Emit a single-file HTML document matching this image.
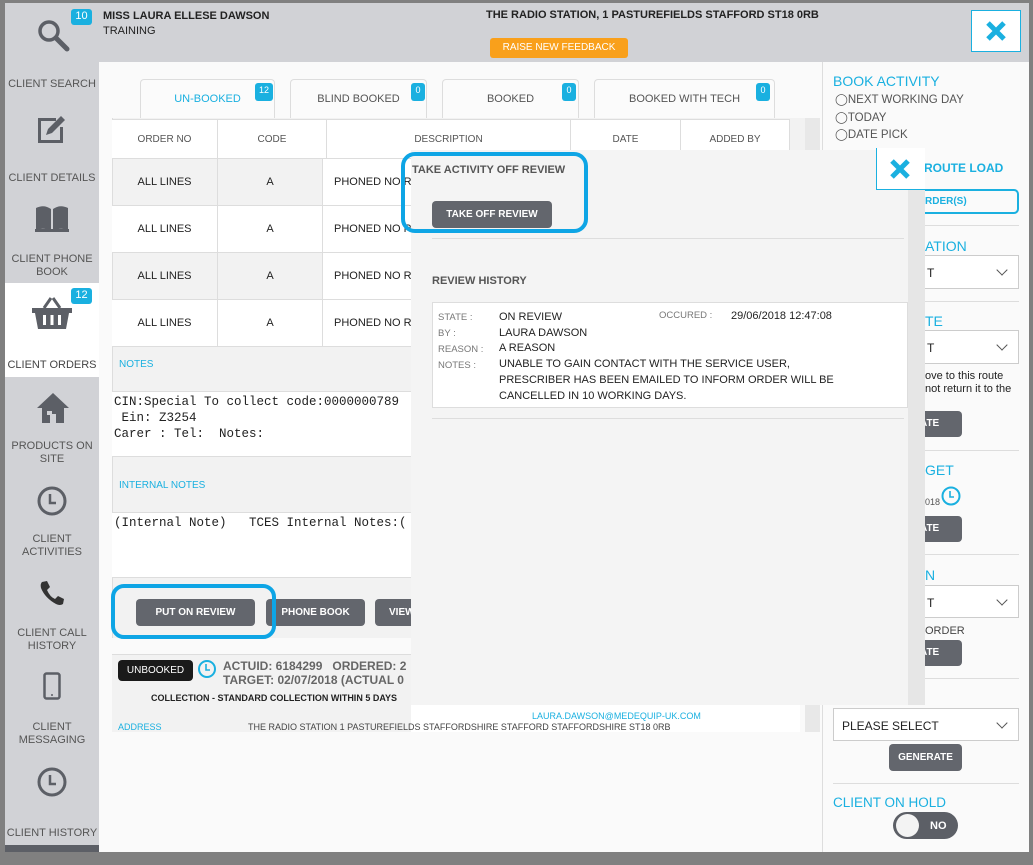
<!DOCTYPE html>
<html><head><meta charset="utf-8"><style>
*{box-sizing:border-box;margin:0;padding:0}
body{width:1033px;height:865px;background:#808080;font-family:"Liberation Sans",Arial,sans-serif;position:relative;overflow:hidden;color:#222}
.a{position:absolute}
.side{left:5px;top:3px;width:94px;height:849px;background:#d1d2d6}
.sl{position:absolute;left:0;width:94px;text-align:center;font-size:11px;color:#555;line-height:13px}
.badge{position:absolute;background:#1ab0e0;color:#fff;font-size:11px;border-radius:3px;text-align:center;line-height:15px;height:16px}
.btn{position:absolute;background:#63666d;color:#fff;font-size:10px;font-weight:bold;text-align:center;border-radius:4px}
.tab{position:absolute;top:79px;height:40px;border:1px solid #ddd;border-bottom:none;background:#fbfbfb;border-radius:4px 4px 0 0;font-size:11px;color:#555;text-align:center;line-height:38px}
.cell{position:absolute;border-right:1px solid #ddd;border-bottom:1px solid #ddd;font-size:11px;display:flex;align-items:center;justify-content:center}
.blue{color:#1ab0e0}
.hr{position:absolute;height:1px;background:#ddd}
.sel{position:absolute;border:1px solid #ccc;background:#fff;font-size:12px}
.chev{position:absolute;right:12px;top:10px;width:8px;height:8px;border-right:1px solid #555;border-bottom:1px solid #555;transform:rotate(45deg)}
</style></head><body>
<div class="a side"></div>
<svg class="a" style="left:36px;top:18px" width="34" height="34" viewBox="0 0 34 34"><circle cx="13" cy="13" r="9" fill="none" stroke="#5c5f66" stroke-width="3.5"/><line x1="20" y1="20" x2="31" y2="31" stroke="#5c5f66" stroke-width="5" stroke-linecap="round"/></svg>
<div class="badge" style="left:71px;top:9px;width:21px">10</div>
<div class="sl" style="left:5px;top:78px">CLIENT SEARCH</div>
<svg class="a" style="left:36px;top:113px" width="32" height="32" viewBox="0 0 32 32"><path d="M2 5h18v3H5v19h19V14h3v16H2z" fill="#5c5f66"/><path d="M10 22l2-6L25 3l4 4-13 13z" fill="#5c5f66"/></svg>
<div class="sl" style="left:5px;top:172px">CLIENT DETAILS</div>
<svg class="a" style="left:35px;top:204px" width="34" height="28" viewBox="0 0 34 28"><path d="M1 4q8-4 15 1v22q-7-4-15-1z M18 5q7-5 15-1v22q-8-3-15 1z" fill="#5c5f66"/><rect x="0" y="25" width="34" height="3" fill="#5c5f66"/></svg>
<div class="sl" style="left:5px;top:253px">CLIENT PHONE<br>BOOK</div>
<div class="a" style="left:5px;top:283px;width:94px;height:94px;background:#fff"></div>
<svg class="a" style="left:32px;top:296px" width="40" height="36" viewBox="0 0 40 36"><path d="M12 12l7-10M28 12l-7-10" stroke="#5c5f66" stroke-width="3"/><path d="M0 12h40v5h-3l-3 16H6L3 17H0z" fill="#5c5f66"/><rect x="11" y="19" width="3" height="10" fill="#fff"/><rect x="18.5" y="19" width="3" height="10" fill="#fff"/><rect x="26" y="19" width="3" height="10" fill="#fff"/></svg>
<div class="badge" style="left:71px;top:288px;width:21px">12</div>
<div class="sl" style="left:5px;top:359px;color:#444">CLIENT ORDERS</div>
<svg class="a" style="left:36px;top:392px" width="34" height="32" viewBox="0 0 34 32"><path d="M17 1L1 16h5v15h8v-9h6v9h8V16h5z" fill="#5c5f66"/><rect x="11" y="19" width="5" height="4" fill="#d1d2d6"/></svg>
<div class="sl" style="left:5px;top:440px">PRODUCTS ON<br>SITE</div>
<svg class="a" style="left:36px;top:485px" width="32" height="32"><circle cx="16" cy="16" r="13" fill="none" stroke="#5c5f66" stroke-width="3"/><path d="M14 9v9h6" fill="none" stroke="#5c5f66" stroke-width="2.5"/></svg>
<div class="sl" style="left:5px;top:533px">CLIENT<br>ACTIVITIES</div>
<svg class="a" style="left:39px;top:580px" width="26" height="26" viewBox="0 0 26 26"><path d="M3 2l5-1 3 6-3 3q3 7 8 9l3-3 6 3-1 5q-3 2-7 0Q6 18 2 8 1 4 3 2z" fill="#333"/></svg>
<div class="sl" style="left:5px;top:627px">CLIENT CALL<br>HISTORY</div>
<svg class="a" style="left:43px;top:672px" width="18" height="28"><rect x="1.5" y="1.5" width="15" height="25" rx="2" fill="none" stroke="#5c5f66" stroke-width="2.5"/><circle cx="9" cy="23" r="1" fill="#5c5f66"/></svg>
<div class="sl" style="left:5px;top:721px">CLIENT<br>MESSAGING</div>
<svg class="a" style="left:36px;top:766px" width="32" height="32"><circle cx="16" cy="16" r="13" fill="none" stroke="#5c5f66" stroke-width="3"/><path d="M14 9v9h6" fill="none" stroke="#5c5f66" stroke-width="2.5"/></svg>
<div class="sl" style="left:5px;top:827px">CLIENT HISTORY</div>
<div class="a" style="left:5px;top:845px;width:94px;height:7px;background:#5c5f66"></div>

<div class="a" style="left:99px;top:3px;width:931px;height:59px;background:#d1d2d6"></div>
<div class="a" style="left:103px;top:9px;font-size:11px;font-weight:bold;line-height:15px">MISS LAURA ELLESE DAWSON<br><span style="font-weight:normal">TRAINING</span></div>
<div class="a" style="left:486px;top:9px;font-size:11px;font-weight:bold">THE RADIO STATION, 1 PASTUREFIELDS STAFFORD ST18 0RB</div>
<div class="a" style="left:490px;top:38px;width:138px;height:20px;background:#f9a01b;color:#fff;font-size:10px;text-align:center;line-height:20px;border-radius:3px">RAISE NEW FEEDBACK</div>
<div class="a" style="left:971px;top:10px;width:50px;height:42px;background:#fff;border:1px solid #1ab0e0"></div>
<svg class="a" style="left:985px;top:20px" width="22" height="22"><path d="M3 3l16 16M19 3L3 19" stroke="#1ab0e0" stroke-width="5"/></svg>

<div class="a" style="left:99px;top:62px;width:723px;height:790px;background:#fafafa"></div>
<div class="tab blue" style="left:140px;width:135px;background:#fbfbfb">UN-BOOKED</div>
<div class="badge" style="left:255px;top:83px;width:18px;height:18px;font-size:9px">12</div>
<div class="tab" style="left:290px;width:137px">BLIND BOOKED</div>
<div class="badge" style="left:411px;top:83px;width:14px;height:18px;font-size:9px">0</div>
<div class="tab" style="left:442px;width:137px">BOOKED</div>
<div class="badge" style="left:562px;top:83px;width:14px;height:18px;font-size:9px">0</div>
<div class="tab" style="left:594px;width:181px">BOOKED WITH TECH</div>
<div class="badge" style="left:756px;top:83px;width:14px;height:18px;font-size:9px">0</div>
<div class="a" style="left:112px;top:118px;width:693px;height:520px;background:#f2f2f2;border-left:1px solid #ddd"></div>
<div class="a" style="left:112px;top:119px;width:678px;height:39px;background:#fff;border-top:1px solid #ddd"></div>
<div class="cell" style="left:112px;top:120px;width:106px;height:39px;color:#555;font-size:10px">ORDER NO</div>
<div class="cell" style="left:218px;top:120px;width:109px;height:39px;color:#555;font-size:10px">CODE</div>
<div class="cell" style="left:327px;top:120px;width:244px;height:39px;color:#555;font-size:10px">DESCRIPTION</div>
<div class="cell" style="left:571px;top:120px;width:110px;height:39px;color:#555;font-size:10px">DATE</div>
<div class="cell" style="left:681px;top:120px;width:109px;height:39px;color:#555;font-size:10px">ADDED BY</div>
<div class="cell" style="left:112px;top:159px;width:106px;height:47px">ALL LINES</div><div class="cell" style="left:218px;top:159px;width:105px;height:47px">A</div><div class="cell" style="left:323px;top:159px;width:100px;height:47px;justify-content:flex-start;padding-left:11px;background:#fff">PHONED NO R</div>
<div class="cell" style="left:112px;top:206px;width:106px;height:47px;background:#fff">ALL LINES</div><div class="cell" style="left:218px;top:206px;width:105px;height:47px;background:#fff">A</div><div class="cell" style="left:323px;top:206px;width:100px;height:47px;justify-content:flex-start;padding-left:11px;background:#fff">PHONED NO R</div>
<div class="cell" style="left:112px;top:253px;width:106px;height:47px">ALL LINES</div><div class="cell" style="left:218px;top:253px;width:105px;height:47px">A</div><div class="cell" style="left:323px;top:253px;width:100px;height:47px;justify-content:flex-start;padding-left:11px;background:#fff">PHONED NO R</div>
<div class="cell" style="left:112px;top:300px;width:106px;height:47px;background:#fff">ALL LINES</div><div class="cell" style="left:218px;top:300px;width:105px;height:47px;background:#fff">A</div><div class="cell" style="left:323px;top:300px;width:100px;height:47px;justify-content:flex-start;padding-left:11px;background:#fff">PHONED NO R</div>
<div class="a blue" style="left:119px;top:359px;font-size:10px">NOTES</div>
<div class="a" style="left:112px;top:391px;width:310px;height:66px;background:#fff;border-top:1px solid #ddd;border-bottom:1px solid #ddd;font-family:'Liberation Mono',monospace;font-size:12.5px;line-height:16px;padding:2px;white-space:pre">CIN:Special To collect code:0000000789
 Ein: Z3254
Carer : Tel:  Notes:</div>
<div class="a blue" style="left:119px;top:480px;font-size:10px">INTERNAL NOTES</div>
<div class="a" style="left:112px;top:512px;width:310px;height:66px;background:#fff;border-top:1px solid #ddd;border-bottom:1px solid #ddd;font-family:'Liberation Mono',monospace;font-size:12.5px;line-height:16px;padding:2px;white-space:pre">(Internal Note)   TCES Internal Notes:(</div>
<div class="a" style="left:805px;top:118px;width:15px;height:614px;background:#e8e8e8"></div>
<div class="btn" style="left:136px;top:599px;width:119px;height:27px;line-height:27px">PUT ON REVIEW</div>
<div class="btn" style="left:266px;top:599px;width:99px;height:27px;line-height:27px">PHONE BOOK</div>
<div class="btn" style="left:375px;top:599px;width:50px;height:27px;line-height:27px;text-align:left;padding-left:14px">VIEW</div>
<div class="a" style="left:111px;top:584px;width:165px;height:55px;border:4px solid #0ea5e5;border-radius:13px"></div>
<div class="a" style="left:112px;top:654px;width:688px;height:78px;background:#f2f2f2;border-top:1px solid #ddd"></div>
<div class="a" style="left:411px;top:705px;width:389px;height:27px;background:#fff"></div>
<div class="a" style="left:118px;top:660px;width:75px;height:21px;background:#1a1a1a;color:#fff;font-size:10px;text-align:center;line-height:21px;border-radius:4px">UNBOOKED</div>
<svg class="a" style="left:197px;top:659px" width="20" height="20"><circle cx="10" cy="10" r="8" fill="none" stroke="#1ab0e0" stroke-width="2"/><path d="M9 5v6h4" fill="none" stroke="#1ab0e0" stroke-width="1.6"/></svg>
<div class="a" style="left:223px;top:659px;font-size:12px;font-weight:bold;color:#666;line-height:14px;white-space:nowrap">ACTUID: 6184299 &nbsp; ORDERED: 2<br>TARGET: 02/07/2018 (ACTUAL 0</div>
<div class="a" style="left:151px;top:693px;font-size:9px;font-weight:bold">COLLECTION - STANDARD COLLECTION WITHIN 5 DAYS</div>
<div class="a blue" style="left:532px;top:711px;font-size:9px">LAURA.DAWSON@MEDEQUIP-UK.COM</div>
<div class="a blue" style="left:118px;top:722px;font-size:9px">ADDRESS</div>
<div class="a" style="left:248px;top:722px;font-size:9px;color:#444">THE RADIO STATION 1 PASTUREFIELDS STAFFORDSHIRE STAFFORD STAFFORDSHIRE ST18 0RB</div>

<div class="a" style="left:822px;top:62px;width:208px;height:790px;background:#fafafa;border-left:1px solid #ddd"></div>
<div class="a blue" style="left:833px;top:73px;font-size:14px">BOOK ACTIVITY</div>
<div class="a" style="left:835px;top:92px;font-size:11.5px;color:#555;line-height:17.5px">◯NEXT WORKING DAY<br>◯TODAY<br>◯DATE PICK</div>
<div class="a blue" style="left:924px;top:161px;font-size:12px;font-weight:bold">ROUTE LOAD</div>
<div class="a" style="left:880px;top:189px;width:139px;height:25px;border:2px solid #1ab0e0;border-radius:5px"></div>
<div class="a blue" style="left:925px;top:196px;font-size:10px;font-weight:bold">RDER(S)</div>
<div class="hr" style="left:833px;top:225px;width:186px"></div>
<div class="a blue" style="left:925px;top:238px;font-size:14px">ATION</div>
<div class="sel" style="left:833px;top:255px;width:186px;height:34px"><span style="position:absolute;left:93px;top:10px">T</span><div class="chev"></div></div>
<div class="hr" style="left:833px;top:301px;width:186px"></div>
<div class="a blue" style="left:925px;top:313px;font-size:14px">TE</div>
<div class="sel" style="left:833px;top:330px;width:186px;height:34px"><span style="position:absolute;left:93px;top:10px">T</span><div class="chev"></div></div>
<div class="a" style="left:925px;top:370px;font-size:11px;line-height:13px">ove to this route<br>not return it to the</div>
<div class="btn" style="left:890px;top:411px;width:72px;height:26px;line-height:26px">DATE</div>
<div class="hr" style="left:833px;top:450px;width:186px"></div>
<div class="a blue" style="left:925px;top:462px;font-size:14px">GET</div>
<div class="a" style="left:925px;top:497px;font-size:9px;color:#555">018</div>
<svg class="a" style="left:940px;top:485px" width="22" height="22"><circle cx="11" cy="11" r="8.5" fill="none" stroke="#1ab0e0" stroke-width="2"/><path d="M10 6v6h4" fill="none" stroke="#1ab0e0" stroke-width="1.6"/></svg>
<div class="btn" style="left:890px;top:516px;width:72px;height:26px;line-height:26px">DATE</div>
<div class="hr" style="left:833px;top:554px;width:186px"></div>
<div class="a blue" style="left:925px;top:567px;font-size:14px">N</div>
<div class="sel" style="left:833px;top:585px;width:186px;height:33px"><span style="position:absolute;left:93px;top:10px">T</span><div class="chev"></div></div>
<div class="a" style="left:925px;top:625px;font-size:11px;color:#444">ORDER</div>
<div class="btn" style="left:890px;top:640px;width:72px;height:26px;line-height:26px">DATE</div>
<div class="hr" style="left:833px;top:678px;width:186px"></div>
<div class="sel" style="left:833px;top:708px;width:186px;height:33px"><span style="position:absolute;left:8px;top:10px">PLEASE SELECT</span><div class="chev"></div></div>
<div class="btn" style="left:889px;top:744px;width:73px;height:27px;line-height:27px">GENERATE</div>
<div class="hr" style="left:833px;top:783px;width:186px"></div>
<div class="a blue" style="left:833px;top:795px;font-size:13.5px">CLIENT ON HOLD</div>
<div class="a" style="left:893px;top:812px;width:65px;height:27px;background:#5c5f66;border-radius:14px"></div>
<div class="a" style="left:896px;top:814px;width:23px;height:23px;background:#f3f3f3;border-radius:50%"></div>
<div class="a" style="left:930px;top:820px;font-size:11px;font-weight:bold;color:#fff">NO</div>
<div class="a" style="left:1029px;top:0;width:4px;height:865px;background:#808080"></div>
<div class="a" style="left:0;top:852px;width:1033px;height:13px;background:#808080"></div>
<div class="a" style="left:99px;top:0;width:934px;height:3px;background:#808080"></div>

<div class="a" style="left:411px;top:150px;width:514px;height:555px;background:#f4f4f4"></div>
<div class="a" style="left:908px;top:190px;width:17px;height:515px;background:#e6e6e6"></div>
<div class="a" style="left:876px;top:148px;width:49px;height:42px;background:#fff;border-left:1px solid #1ab0e0;border-bottom:1px solid #1ab0e0"></div>
<svg class="a" style="left:889px;top:158px" width="22" height="22"><path d="M3 3l16 16M19 3L3 19" stroke="#1ab0e0" stroke-width="5"/></svg>
<div class="a" style="left:412px;top:164px;font-size:11px;font-weight:bold;color:#555">TAKE ACTIVITY OFF REVIEW</div>
<div class="btn" style="left:432px;top:201px;width:120px;height:27px;line-height:27px">TAKE OFF REVIEW</div>
<div class="a" style="left:401px;top:152px;width:187px;height:81px;border:4px solid #0ea5e5;border-radius:14px"></div>
<div class="hr" style="left:432px;top:238px;width:472px"></div>
<div class="a" style="left:432px;top:275px;font-size:11px;font-weight:bold;color:#555">REVIEW HISTORY</div>
<div class="a" style="left:432px;top:302px;width:476px;height:106px;background:#fff;border:1px solid #ddd"></div>
<div class="a" style="left:438px;top:310px;font-size:9.5px;color:#777;line-height:16px">STATE :<br>BY :<br>REASON :<br>NOTES :</div>
<div class="a" style="left:499px;top:310px;font-size:11px;line-height:15.7px">ON REVIEW<br>LAURA DAWSON<br>A REASON<br>UNABLE TO GAIN CONTACT WITH THE SERVICE USER,<br>PRESCRIBER HAS BEEN EMAILED TO INFORM ORDER WILL BE<br>CANCELLED IN 10 WORKING DAYS.</div>
<div class="a" style="left:659px;top:310px;font-size:9.5px;color:#777">OCCURED :</div>
<div class="a" style="left:731px;top:310px;font-size:11px">29/06/2018 12:47:08</div>
<div class="hr" style="left:432px;top:418px;width:472px"></div>
</body></html>
